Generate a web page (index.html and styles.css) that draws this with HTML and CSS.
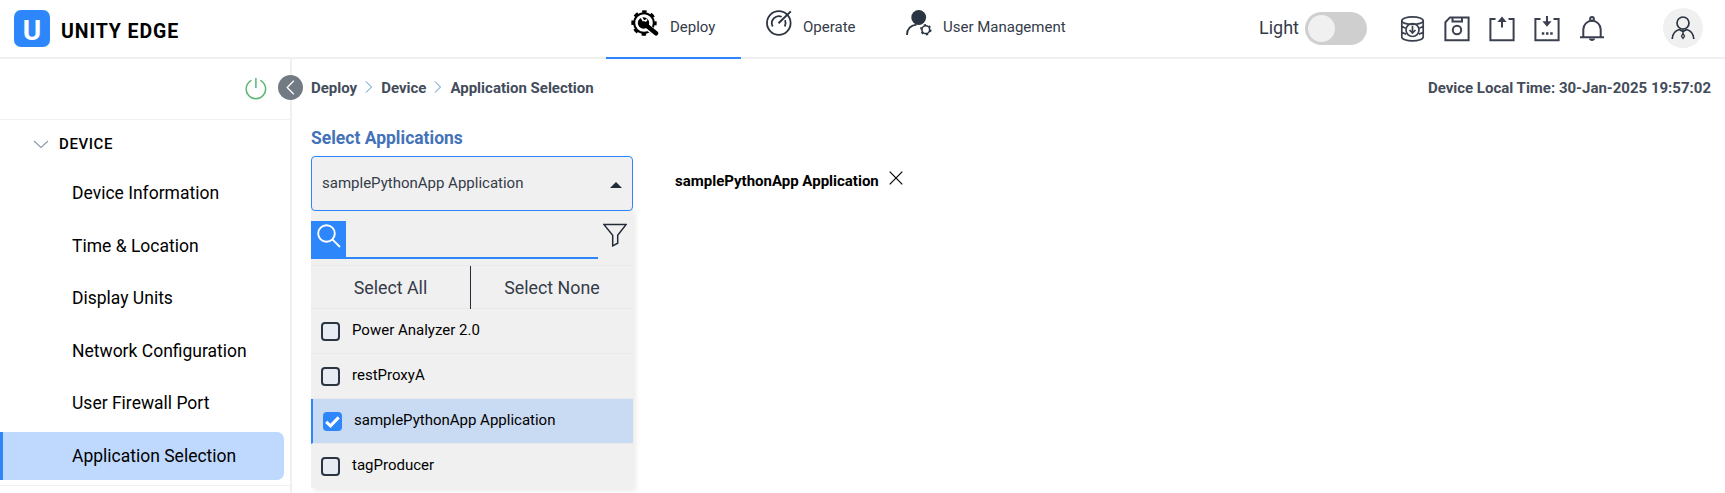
FILE: index.html
```html
<!DOCTYPE html>
<html lang="en">
<head>
<meta charset="utf-8">
<title>Unity Edge</title>
<link rel="stylesheet" href="styles.css">
</head>
<body>
<header class="topbar">
  <div class="brand">
    <div class="logo">U</div>
    <div class="brand-name">UNITY EDGE</div>
  </div>
  <nav class="tabs">
    <a class="tab active">
      <svg class="tab-icon" width="28" height="26" viewBox="0 0 28 26"><circle cx="13" cy="13" r="9.8" fill="none" stroke="#000" stroke-width="2"/><circle cx="13" cy="13" r="11.4" fill="none" stroke="#000" stroke-width="2.600" stroke-dasharray="4.477 4.477" stroke-dashoffset="2.200"/><circle cx="12.500" cy="13" r="5.700" fill="#000"/><path d="M9.500 5.800l2.700 4.700 2.200.6 1.500-1.800" fill="none" stroke="#fff" stroke-width="1.800"/><path d="M18.500 18.500L24.500 23.500" stroke="#fff" stroke-width="6.400"/><path d="M13 13.5L25 23.300" stroke="#000" stroke-width="4.400" stroke-linecap="round"/></svg>
      <span>Deploy</span>
    </a>
    <a class="tab operate">
      <svg class="tab-icon" width="26" height="26" viewBox="0 0 26 26" fill="none" stroke="#2b3442" stroke-width="1.8"><circle cx="12.8" cy="13" r="11.8"/><path d="M6.7 16.5A7 7 0 0 1 15.7 6.8M19 10.2a7 7 0 0 1-.2 6.3"/><path d="M12.5 13.2L24.8 1.4" stroke-width="2"/></svg>
      <span>Operate</span>
    </a>
    <a class="tab users">
      <svg class="tab-icon" width="26" height="26" viewBox="0 0 26 26" fill="none" stroke="#2b3442" stroke-width="1.8"><circle cx="12.7" cy="7.5" r="7.4" fill="#2b3442" stroke="none"/><path d="M1 25c0-6 3.5-9.500 9.500-10.300"/><circle cx="19.800" cy="19.700" r="3.900" stroke-width="1.600"/><circle cx="19.800" cy="19.700" r="5" stroke-width="1.500" stroke-dasharray="2.200 3.036"/></svg>
      <span>User Management</span>
    </a>
  </nav>
  <div class="tools">
    <span class="theme-label">Light</span>
    <div class="toggle"><div class="knob"></div></div>
    <div class="tool-icons">
      <svg width="25" height="26" viewBox="0 0 25 26" fill="none" stroke="#3a404e" stroke-width="1.7"><ellipse cx="12.500" cy="4.700" rx="10.700" ry="3.800"/><path d="M1.800 4.700v16.200c0 2.200 4.800 4 10.700 4s10.700-1.800 10.700-4V4.700M1.800 10.200c1.200 1.100 2.500 1.600 4 2M23.200 10.200c-1.200 1.100-2.500 1.600-4 2M1.800 16.200c1.200 1.100 2.500 1.600 4.300 2M23.200 16.200c-1.200 1.100-2.500 1.600-4.300 2"/><circle cx="12.500" cy="14" r="6.500"/><path d="M12.500 10v6.500M9.500 14l3 3 3-3"/></svg>
      <svg width="26" height="26" viewBox="0 0 26 26" fill="none" stroke="#3a404e" stroke-width="2"><path d="M1.400 6.200L6 1.400h18.600v22.800H1.400z"/><path d="M8.500 1.400v4h9.500v-4"/><circle cx="13" cy="14" r="4.200"/></svg>
      <svg width="26" height="26" viewBox="0 0 26 26" fill="none" stroke="#3a404e" stroke-width="2"><path d="M6.500 2.900H1.400v21.300h23.200V2.900h-5.100M13 5v6.500"/><path d="M8.400 6L13 .6 17.600 6z" fill="#3a404e" stroke="none"/></svg>
      <svg width="26" height="26" viewBox="0 0 26 26" fill="none" stroke="#3a404e" stroke-width="2"><path d="M6.500 2.900H1.400v21.300h23.200V2.900h-5.100M13 0v6"/><path d="M8.400 5.200L13 10.800l4.600-5.600z" fill="#3a404e" stroke="none"/><path d="M7.800 17.500h2.500M12 17.500h2.500M16.200 17.500h2.500" stroke-width="2.500"/></svg>
      <svg width="26" height="26" viewBox="0 0 26 26" fill="none" stroke="#3a404e" stroke-width="2"><path d="M1 21.200h24M4.300 21v-7.500a8.700 8.700 0 0 1 17.400 0V21"/><circle cx="13" cy="2.900" r="1.900"/><path d="M9.800 22.500c.4 3.300 6 3.300 6.400 0z" fill="#3a404e" stroke="none"/></svg>
    </div>
    <div class="avatar">
      <svg width="24" height="24" viewBox="0 0 24 24" fill="none" stroke="#2b3442" stroke-width="1.700"><circle cx="12" cy="7" r="6"/><path d="M1.200 23c.3-5 2.800-8.300 7-9.500L12 15.500l3.800-2c4.200 1.200 6.700 4.500 7 9.500"/><path d="M12 13v4.500M12 17.300l-1.500 3 1.500 2 1.500-2z" stroke-width="1.300"/></svg>
    </div>
  </div>
</header>
<div class="layout">
  <aside class="sidebar">
    <div class="side-head">
      <svg width="22" height="22" viewBox="0 0 22 22" fill="none" stroke="#5fb574" stroke-width="1.500"><path d="M6.500 2.300a9.700 9.700 0 1 0 8.800 0M10.900 0v10"/></svg>
    </div>
    <button class="collapse"><svg width="9" height="15" viewBox="0 0 9 15" fill="none" stroke="#fff" stroke-width="1.300"><path d="M7.800.8L1.200 7.500l6.600 6.700"/></svg></button>
    <div class="group">
      <svg width="16" height="9" viewBox="0 0 16 9" fill="none" stroke="#8e9baa" stroke-width="1.200"><path d="M1 1l7 6.500L15 1"/></svg>
      <span>DEVICE</span>
    </div>
    <ul class="menu">
      <li>Device Information</li>
      <li>Time &amp; Location</li>
      <li>Display Units</li>
      <li>Network Configuration</li>
      <li>User Firewall Port</li>
      <li class="selected">Application Selection</li>
    </ul>
  </aside>
  <main class="content">
    <div class="crumb-row">
      <div class="crumbs">
        <span>Deploy</span>
        <svg width="8" height="12" viewBox="0 0 8 12" fill="none" stroke="#4c8fc4" stroke-width="1"><path d="M1 .5L6.500 6 1 11.500"/></svg>
        <span>Device</span>
        <svg width="8" height="12" viewBox="0 0 8 12" fill="none" stroke="#4c8fc4" stroke-width="1"><path d="M1 .5L6.500 6 1 11.500"/></svg>
        <span>Application Selection</span>
      </div>
      <div class="clock">Device Local Time: 30-Jan-2025 19:57:02</div>
    </div>
    <h2 class="label">Select Applications</h2>
    <div class="picker-row">
      <div class="picker">
        <div class="select"><span>samplePythonApp Application</span><i class="caret"></i></div>
        <div class="panel">
          <div class="search-row">
            <div class="search-icon"><svg width="24" height="24" viewBox="0 0 24 24" fill="none" stroke="#fff" stroke-width="1.900"><circle cx="9.500" cy="9.500" r="8.300"/><path d="M15.300 15.300l7.700 7.700"/></svg></div>
            <div class="search-field"></div>
            <svg class="filter" width="24" height="24" viewBox="0 0 24 24" fill="none" stroke="#222b38" stroke-width="1.500"><path d="M1 1.600h22L14.700 12.300v7.900L9.700 22.800V12.300z"/></svg>
          </div>
          <div class="bulk"><span>Select All</span><span>Select None</span></div>
          <div class="option"><i class="box"></i><span>Power Analyzer 2.0</span></div>
          <div class="option"><i class="box"></i><span>restProxyA</span></div>
          <div class="option checked"><i class="box"><svg width="15" height="12" viewBox="0 0 15 12" fill="none" stroke="#fff" stroke-width="3"><path d="M1.200 5.800l4.300 4L13.700 1.400"/></svg></i><span>samplePythonApp Application</span></div>
          <div class="option"><i class="box"></i><span>tagProducer</span></div>
        </div>
      </div>
      <div class="chip"><span>samplePythonApp Application</span><svg width="14" height="14" viewBox="0 0 14 14" stroke="#000" stroke-width="1.200"><path d="M.7.700l12.600 12.600M13.300.700L.700 13.300"/></svg></div>
    </div>
  </main>
</div>
</body>
</html>
```
FILE: styles.css
```css
* { box-sizing: border-box; }
body { margin: 0; height: 493px; overflow: hidden; background: #fff; color: #000; font-family: Roboto, sans-serif; font-size: 15px; }
svg { display: block; flex: none; }
.topbar { height: 59px; border-bottom: 2px solid #f0f0f0; display: grid; grid-template-columns: 606px 1fr auto; }
.brand { display: flex; padding: 10px 0 0 14px; }
.logo { width: 36px; height: 37px; border-radius: 7px; background: #2d87fb; color: #fff; font: 700 28px/41px Roboto, sans-serif; text-align: center; }
.brand-name { margin: 10px 0 0 11px; font-size: 19.500px; line-height: 24px; font-weight: 700; letter-spacing: .9px; }
.tabs { display: flex; height: 59px; color: #343b49; }
.tab { display: flex; padding: 10px 25px 0; width: 135px; border-bottom: 2px solid transparent; white-space: nowrap; }
.tab span { line-height: 20px; margin: 7px 0 0 11px; }
.tab.active { border-color: #2d87fb; }
.operate { width: 140px; }
.operate span { margin-left: 11px; }
.users { width: auto; }
.users span { margin-left: 11px; }
.tools { display: flex; padding-right: 22px; }
.theme-label { margin: 17px 6px 0 0; font-size: 18px; line-height: 22px; color: #343b49; }
.toggle { width: 62px; height: 33px; margin-top: 12px; border-radius: 17px; background: #cfcfcf; padding: 3px; }
.knob { width: 27px; height: 27px; border-radius: 50%; background: #f0f0f0; }
.tool-icons { display: flex; gap: 19px; margin: 16px 0 0 33px; }
.avatar { width: 40px; height: 40px; margin: 8px 0 0 58px; border-radius: 50%; background: #f0f0f0; display: flex; align-items: center; justify-content: center; }
.layout { display: flex; height: 434px; }
.sidebar { position: relative; width: 292px; flex: none; border-right: 2px solid #f0f0f0; }
.side-head { height: 61px; border-bottom: 1px solid #f0f0f0; display: flex; justify-content: flex-end; padding: 19px 23px 0 0; }
.collapse { position: absolute; left: 278px; top: 16px; width: 25px; height: 25px; padding: 0; border: 0; border-radius: 50%; background: #727a84; display: flex; align-items: center; justify-content: center; }
.group { height: 46px; display: flex; padding: 14px 0 0 33px; font-weight: 500; line-height: 20px; letter-spacing: .6px; font-size: 15px; }
.group svg { margin: 6px 10px 0 0; }
.menu { list-style: none; margin: 0; padding: 3px 6px 0 0; border-bottom: 1px solid #f0f0f0; height: 320px; }
.menu li { height: 48px; margin-bottom: 4.600px; padding-left: 72px; font-size: 17.500px; line-height: 48px; }
.menu .selected { background: #bfd9fe; border-left: 3px solid #2d87fb; padding-left: 69px; border-radius: 0 7px 7px 0; }
.content { flex: 1; padding-left: 19px; }
.crumb-row { display: flex; justify-content: space-between; padding: 19px 14px 0 0; height: 59px; font-weight: 700; line-height: 20px; color: #434c5a; }
.crumbs { display: flex; gap: 8px; }
.crumbs svg { margin-top: 3px; }
.label { margin: 0; padding-top: 9px; font-size: 17.500px; line-height: 22px; height: 38px; font-weight: 700; color: #4472b8; }
.picker-row { display: flex; }
.picker { width: 322px; }
.select { position: relative; height: 55px; border: 1px solid #2d87fb; border-radius: 4px; background: #f0f0f0; display: flex; justify-content: space-between; padding: 16px 10px 0 10px; line-height: 20px; color: #343b49; }
.caret { width: 0; height: 0; margin-top: 9px; border: 6px solid transparent; border-top: 0; border-bottom: 6px solid #222b38; }
.panel { margin-top: -3px; padding-top: 13px; background: #f0f0f0; height: 280px; box-shadow: 3px 3px 5px rgba(0,0,0,.08); }
.search-row { height: 44px; display: flex; }
.search-icon { width: 35px; height: 38px; background: #2d87fb; padding: 3px 0 0 6px; }
.search-field { width: 252px; height: 38px; border-bottom: 2px solid #2d87fb; }
.filter { margin: 2px 0 0 5px; }
.bulk { height: 44px; border: solid #e9e9ec; border-width: 1px 0; display: grid; grid-template-columns: 160px 1fr; text-align: center; font-size: 17.800px; line-height: 43px; color: #343b49; }
.bulk span:first-child { border-right: 1px solid #222b38; }
.option { height: 45px; border-bottom: 1px solid #e9e9ec; display: flex; padding: 13px 0 0 10px; line-height: 20px; }
.option span { margin: -2px 0 0 12px; }
.box { width: 19px; height: 19px; border: 2px solid #2b3442; border-radius: 4px; background: #e7ebf3; }
.checked { background: #c9dbf3; border-left: 2px solid #2d87fb; }
.checked .box { border: 0; background: #2d87fb; padding: 4px 0 0 2px; }
.option:last-child { border: 0; height: 43px; }
.chip { display: flex; margin: 14px 0 0 42px; font-weight: 700; line-height: 22px; }
.chip svg { margin: 1px 0 0 10px; }
```
